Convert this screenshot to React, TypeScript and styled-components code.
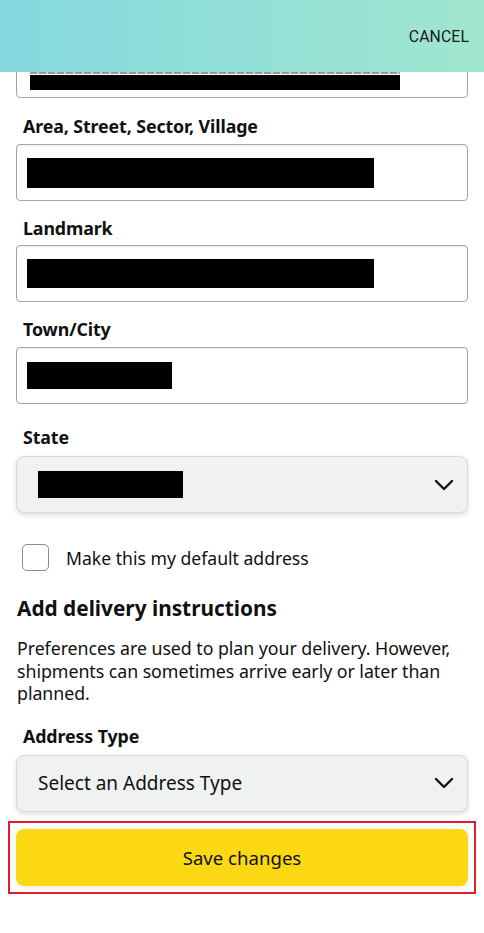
import React from "react";
import styled, { createGlobalStyle } from "styled-components";

const Global = createGlobalStyle`
  html, body { margin: 0; padding: 0; background: #fff; }
  body { font-family: "Noto Sans", "Open Sans", Arial, sans-serif; color: #0f1111; }
  * { box-sizing: border-box; }
`;

const Header = styled.header`
  position: fixed;
  top: 0;
  left: 0;
  right: 0;
  height: 72px;
  z-index: 10;
  background: linear-gradient(90deg, #84d8de 0%, #93e0d6 55%, #a1e6cf 100%);
  display: flex;
  align-items: center;
  justify-content: flex-end;
  padding-right: 15px;
`;

const Cancel = styled.span`
  font-family: Roboto, "Noto Sans", sans-serif;
  font-size: 15.8px;
  letter-spacing: 0.1px;
  color: #1a1a1a;
`;

const Content = styled.main`
  padding: 28px 16px 40px;
  display: flex;
  flex-direction: column;
`;

const Label = styled.div<{ $top: number; $gap: number }>`
  margin-top: ${(p) => p.$top}px;
  margin-bottom: ${(p) => p.$gap}px;
  padding-left: 7px;
  font-size: 17.8px;
  font-weight: 700;
  line-height: 22px;
  letter-spacing: -0.1px;
`;

const Input = styled.div<{ $h: number }>`
  height: ${(p) => p.$h}px;
  border: 1px solid #a2a6a6;
  border-radius: 4px;
  background: #fff;
  display: flex;
  flex-direction: column;
  justify-content: flex-end;
  padding: 0 0 7px 10px;
  box-shadow: 0 1px 2px rgba(15, 17, 17, 0.08) inset;
`;

const CenterInput = styled(Input)`
  justify-content: center;
  padding: 0 0 0 10px;
`;

const Redact = styled.div<{ $w: number; $h: number }>`
  width: ${(p) => p.$w}px;
  height: ${(p) => p.$h}px;
  background: #000;
`;

const Ghost = styled.div`
  width: 370px;
  height: 3px;
  margin: 0 0 1px 3px;
  background: repeating-linear-gradient(90deg, #9a9a9a 0 7px, #d4d4d4 7px 9px);
`;

const Select = styled.div`
  height: 57px;
  border-radius: 8px;
  background: #f0f2f2;
  border: 1px solid #d5d9d9;
  box-shadow: 0 2px 5px rgba(15, 17, 17, 0.15);
  display: flex;
  align-items: center;
  justify-content: space-between;
  padding: 0 13px 0 21px;
  font-size: 19px;
  color: #0f1111;
`;

const CheckRow = styled.label`
  margin-top: 31px;
  display: flex;
  align-items: center;
  gap: 17px;
  padding-left: 6px;
  font-size: 17.6px;
  line-height: 22px;
`;

const Box = styled.span`
  width: 27px;
  height: 27px;
  border: 1px solid #888c8c;
  border-radius: 5px;
  background: #fff;
`;

const Heading = styled.h2`
  margin: 24px 0 0;
  padding-left: 1px;
  font-size: 20.8px;
  font-weight: 700;
  line-height: 26px;
`;

const Para = styled.p`
  margin: 16px 0 0;
  padding-left: 1px;
  font-size: 17.8px;
  line-height: 22.5px;
  letter-spacing: -0.05px;
`;

const Outline = styled.div`
  margin: 9px -8px 0;
  border: 2px solid #e21c2b;
  padding: 6px 6px;
`;

const Button = styled.button`
  width: 100%;
  height: 57px;
  border: none;
  border-radius: 8px;
  background: #fcd814;
  box-shadow: 0 2px 5px rgba(213, 217, 217, 0.5);
  font-family: inherit;
  font-size: 18.6px;
  color: #0f1111;
`;

const Chevron = () => (
  <svg width="20" height="12" viewBox="0 0 20 12" fill="none">
    <path d="M2 2 L10 10 L18 2" stroke="#0f1111" strokeWidth="2.4" strokeLinecap="round" strokeLinejoin="round" />
  </svg>
);

export default function App() {
  return (
    <>
      <Global />
      <Header>
        <Cancel>CANCEL</Cancel>
      </Header>
      <Content>
        <Input $h={70}>
          <Ghost />
          <Redact $w={370} $h={15} style={{ marginLeft: 3 }} />
        </Input>

        <Label $top={17} $gap={7}>Area, Street, Sector, Village</Label>
        <CenterInput $h={57}>
          <Redact $w={347} $h={30} />
        </CenterInput>

        <Label $top={16} $gap={6}>Landmark</Label>
        <CenterInput $h={57}>
          <Redact $w={347} $h={29} />
        </CenterInput>

        <Label $top={16} $gap={7}>Town/City</Label>
        <CenterInput $h={57}>
          <Redact $w={145} $h={27} />
        </CenterInput>

        <Label $top={22} $gap={8}>State</Label>
        <Select>
          <Redact $w={145} $h={27} />
          <Chevron />
        </Select>

        <CheckRow>
          <Box />
          Make this my default address
        </CheckRow>

        <Heading>Add delivery instructions</Heading>
        <Para>
          Preferences are used to plan your delivery. However, shipments can sometimes arrive early or later than
          planned.
        </Para>

        <Label $top={20} $gap={8}>Address Type</Label>
        <Select>
          <span>Select an Address Type</span>
          <Chevron />
        </Select>

        <Outline>
          <Button>Save changes</Button>
        </Outline>
      </Content>
    </>
  );
}
